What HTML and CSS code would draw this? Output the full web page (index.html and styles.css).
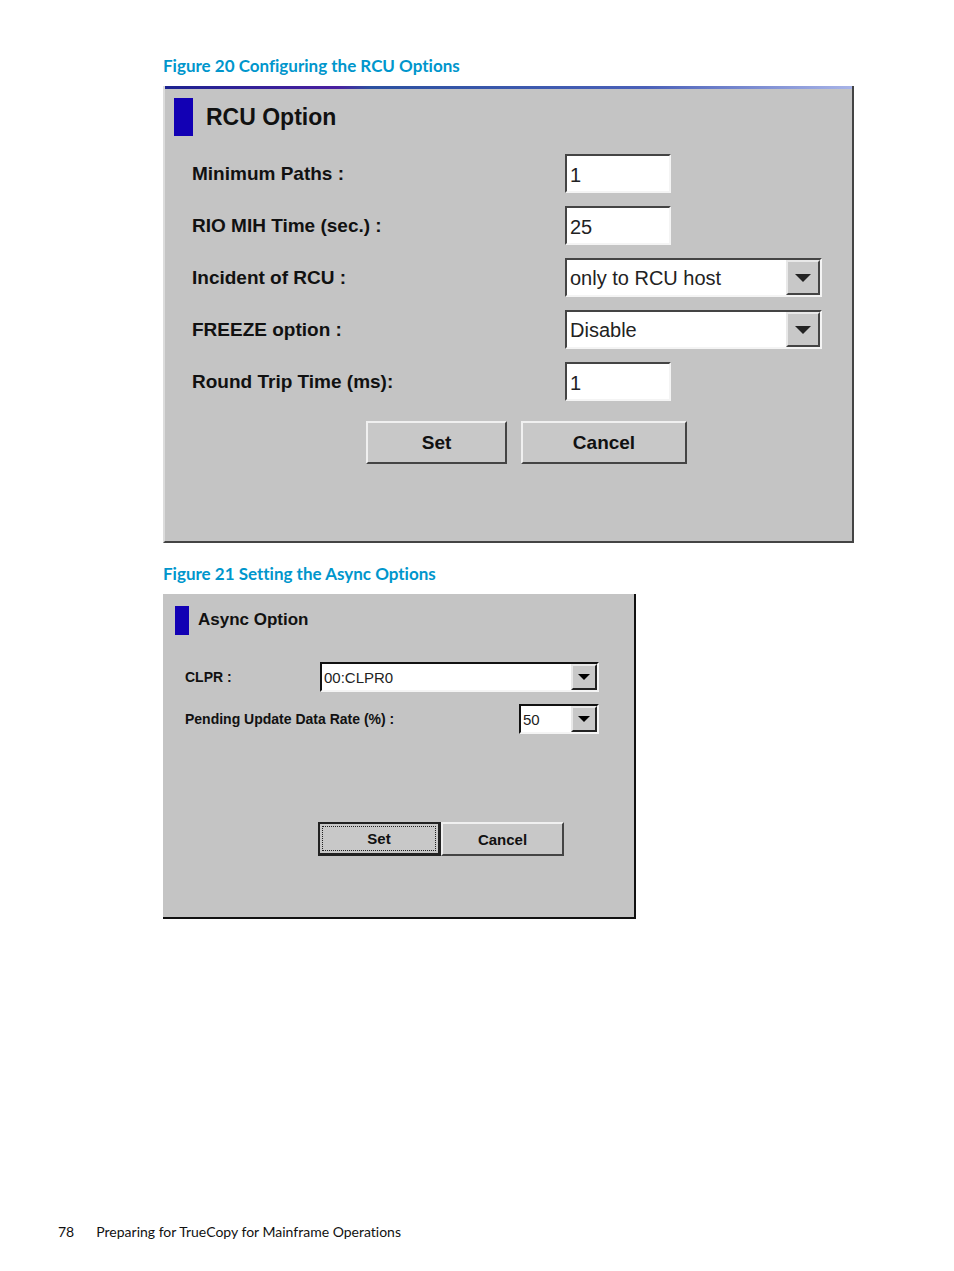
FILE: index.html
```html
<!DOCTYPE html>
<html lang="en">
<head>
    <meta charset="UTF-8">
    <title>Preparing for TrueCopy for Mainframe Operations</title>
    <link rel="stylesheet" href="styles.css">
</head>
<body>
    <main class="content">
        <h2 class="caption">Figure 20 Configuring the RCU Options</h2>
        <form class="panel rcu">
            <h3 class="panel-title">RCU Option</h3>
            <div class="row">
                <label for="min-paths">Minimum Paths :</label>
                <input class="field" id="min-paths" type="text" value="1">
            </div>
            <div class="row">
                <label for="mih-time">RIO MIH Time (sec.) :</label>
                <input class="field" id="mih-time" type="text" value="25">
            </div>
            <div class="row">
                <label for="incident">Incident of RCU :</label>
                <div class="dropdown">
                    <select class="field" id="incident">
                        <option>only to RCU host</option>
                    </select>
                    <span class="arrow"><svg viewBox="0 0 16 8"><path d="M0 0h16L8 8z"/></svg></span>
                </div>
            </div>
            <div class="row">
                <label for="freeze">FREEZE option :</label>
                <div class="dropdown">
                    <select class="field" id="freeze">
                        <option>Disable</option>
                    </select>
                    <span class="arrow"><svg viewBox="0 0 16 8"><path d="M0 0h16L8 8z"/></svg></span>
                </div>
            </div>
            <div class="row">
                <label for="round-trip">Round Trip Time (ms):</label>
                <input class="field" id="round-trip" type="text" value="1">
            </div>
            <div class="buttons">
                <button class="btn" type="button">Set</button>
                <button class="btn btn-wide" type="button">Cancel</button>
            </div>
        </form>

        <h2 class="caption">Figure 21 Setting the Async Options</h2>
        <form class="panel async">
            <h3 class="panel-title">Async Option</h3>
            <div class="row">
                <label for="clpr">CLPR :</label>
                <div class="dropdown">
                    <select class="field" id="clpr">
                        <option>00:CLPR0</option>
                    </select>
                    <span class="arrow"><svg viewBox="0 0 16 8"><path d="M0 0h16L8 8z"/></svg></span>
                </div>
            </div>
            <div class="row">
                <label for="rate">Pending Update Data Rate (%) :</label>
                <div class="dropdown dropdown-small">
                    <select class="field" id="rate">
                        <option>50</option>
                    </select>
                    <span class="arrow"><svg viewBox="0 0 16 8"><path d="M0 0h16L8 8z"/></svg></span>
                </div>
            </div>
            <div class="buttons">
                <button class="btn btn-default" type="button"><span>Set</span></button>
                <button class="btn" type="button">Cancel</button>
            </div>
        </form>
    </main>

    <footer class="footer">
        <span>78</span>
        <span>Preparing for TrueCopy for Mainframe Operations</span>
    </footer>
</body>
</html>
```
FILE: styles.css
```css
* {
    box-sizing: border-box;
}
body {
    display: flex;
    flex-direction: column;
    min-height: 100vh;
    margin: 0;
    background: white;
    color: #111;
    font-family: Lato, sans-serif;
    font-variant-ligatures: none;
}
.content {
    padding: 54px 100px 40px 163px;
}
.caption {
    margin: 0 0 8px;
    color: #0096cc;
    font-size: 17px;
    line-height: 24px;
    font-weight: bold;
}
.panel {
    background: #c4c4c4;
    font-family: "Liberation Sans", Arial, sans-serif;
}
.panel-title {
    display: flex;
    align-items: center;
    margin: 0;
    font-weight: bold;
}
.panel-title::before {
    content: "";
    background: #1200b4;
}
.row {
    display: flex;
    align-items: center;
    justify-content: space-between;
}
.row label {
    font-weight: bold;
}
.field {
    display: block;
    margin: 0;
    border: 2px solid;
    border-color: #444 #f4f4f4 #f4f4f4 #444;
    border-radius: 0;
    background: white;
    color: #222;
    font-family: inherit;
    font-size: inherit;
    appearance: none;
}
.dropdown {
    position: relative;
}
.dropdown .field {
    width: 100%;
}
.arrow {
    position: absolute;
    top: 2px;
    right: 2px;
    bottom: 2px;
    display: flex;
    align-items: center;
    justify-content: center;
    border: 2px solid;
    border-color: #e8e8e8 #444 #444 #e8e8e8;
    background: #c8c8c8;
    pointer-events: none;
}
.arrow svg {
    width: 16px;
    fill: #222;
}
.buttons {
    display: flex;
}
.btn {
    padding: 0;
    border: 2px solid;
    border-color: #f0f0f0 #444 #444 #f0f0f0;
    border-radius: 0;
    background: #c8c8c8;
    color: #111;
    font-family: inherit;
    font-size: inherit;
    font-weight: bold;
}

/* RCU Option */
.rcu {
    max-width: 691px;
    margin-bottom: 19px;
    padding: 9px 30px 77px 27px;
    border-left: 2px solid #dcdcdc;
    border-right: 2px solid #444;
    border-bottom: 2px solid #444;
    background: linear-gradient(to right, #1c2390, #4a1fa0 25%, #2b50a0 30%, #4a60b8 70%, #a8b4e8) top / 100% 3px no-repeat #c4c4c4;
    font-size: 19px;
}
.rcu .panel-title {
    gap: 13px;
    height: 44px;
    margin: 0 0 15px -18px;
    font-size: 23px;
}
.rcu .panel-title::before {
    width: 19px;
    height: 38px;
}
.rcu .row {
    display: grid;
    grid-template-columns: 373px minmax(0, 257px);
    margin-bottom: 13px;
}
.rcu .field {
    width: 106px;
    height: 39px;
    padding: 3px 3px 0;
    font-size: 20px;
}
.rcu .dropdown .field {
    width: 100%;
    padding-top: 0;
}
.rcu .arrow {
    width: 34px;
}
.rcu .buttons {
    gap: 14px;
    margin: 20px 0 0 174px;
}
.rcu .btn {
    width: 141px;
    height: 43px;
}
.rcu .btn-wide {
    width: 166px;
}

/* Async Option */
.async {
    max-width: 473px;
    padding: 10px 35px 61px 22px;
    border-right: 2px solid #111;
    border-bottom: 2px solid #111;
    font-size: 15px;
}
.async .panel-title {
    gap: 9px;
    height: 32px;
    margin: 0 0 26px -10px;
    font-size: 17px;
}
.async .panel-title::before {
    width: 14px;
    height: 29px;
}
.async .row {
    margin-bottom: 12px;
}
.async .row label {
    font-size: 14px;
}
.async .field {
    height: 30px;
    padding: 0 2px;
    border-color: #111 #f4f4f4 #f4f4f4 #111;
}
.async .dropdown {
    width: 279px;
}
.async .dropdown-small {
    width: 80px;
}
.async .arrow {
    width: 26px;
    border-color: #e8e8e8 #222 #222 #e8e8e8;
}
.async .arrow svg {
    width: 12px;
    fill: black;
}
.async .buttons {
    margin: 88px 0 0 133px;
}
.async .btn {
    width: 123px;
    height: 34px;
}
.async .btn-default {
    padding: 2px;
    border-color: #222;
    border-right-width: 3px;
    border-bottom-width: 3px;
}
.btn-default span {
    display: flex;
    align-items: center;
    justify-content: center;
    height: 100%;
    border: 1px dotted #222;
}

.footer {
    display: flex;
    gap: 22px;
    margin-top: auto;
    padding: 0 58px 29px;
    font-size: 14px;
    line-height: 20px;
}
```
